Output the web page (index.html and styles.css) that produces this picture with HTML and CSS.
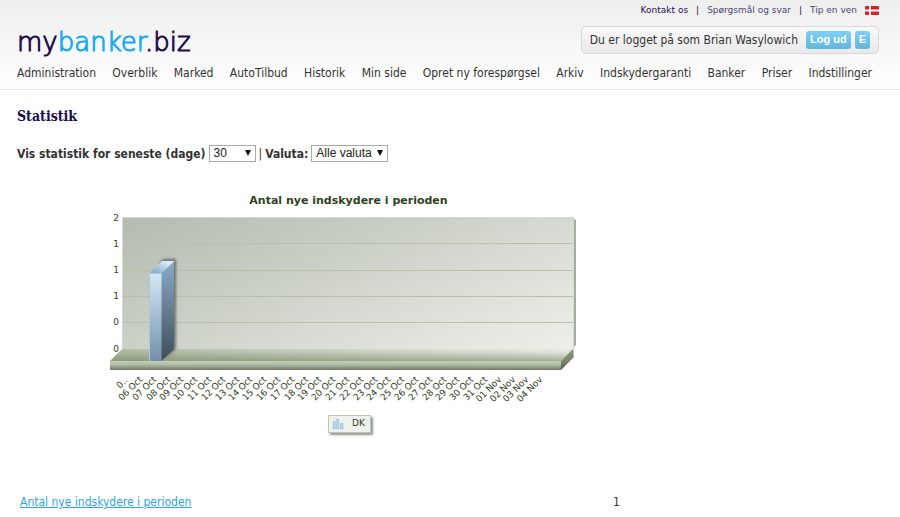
FILE: index.html
```html
<!DOCTYPE html>
<html lang="da">
<head>
<meta charset="utf-8">
<title>Statistik</title>
<link rel="stylesheet" href="styles.css">
</head>
<body>
<header class="header">
  <div class="toplinks">
    <a class="strong" href="#">Kontakt os</a><span class="sep">|</span>
    <a href="#">Spørgsmål og svar</a><span class="sep">|</span>
    <a href="#">Tip en ven</a>
    <svg class="flag" viewBox="0 0 14 9" width="14" height="9" aria-hidden="true"><rect width="14" height="9" rx="1" fill="#e01f26"/><path d="M5 0v9M0 4.5h14" stroke="#fff" stroke-width="1.8"/></svg>
  </div>
  <div class="brandbar">
    <a class="logo" href="#">my<span>banker</span>.biz</a>
    <div class="login">
      <span class="user">Du er logget på som Brian Wasylowich</span>
      <button class="btn" type="button">Log ud</button>
      <button class="btn" type="button">E</button>
    </div>
  </div>
  <nav class="nav">
    <a href="#">Administration</a>
    <a href="#">Overblik</a>
    <a href="#">Marked</a>
    <a href="#">AutoTilbud</a>
    <a href="#">Historik</a>
    <a href="#">Min side</a>
    <a href="#">Opret ny forespørgsel</a>
    <a href="#">Arkiv</a>
    <a href="#">Indskydergaranti</a>
    <a href="#">Banker</a>
    <a href="#">Priser</a>
    <a href="#">Indstillinger</a>
  </nav>
</header>
<main class="main">
  <h1>Statistik</h1>
  <form class="filters">
    <label for="days">Vis statistik for seneste (dage)</label>
    <span class="select days"><select id="days"><option>30</option></select></span>
    <span class="bar">|</span>
    <label for="currency">Valuta:</label>
    <span class="select currency"><select id="currency"><option>Alle valuta</option></select></span>
  </form>
  <svg class="chart" viewBox="100 186 490 258" width="490" height="258" role="img" aria-labelledby="chart-title">
    <defs>
      <linearGradient id="wall" gradientUnits="userSpaceOnUse" x1="230" y1="190" x2="330" y2="440"><stop offset="0" stop-color="#b7bdb2"/><stop offset="1" stop-color="#ecefe9"/></linearGradient>
      <linearGradient id="floor" x1="0" y1="0" x2="0" y2="1"><stop offset="0" stop-color="#b3bea8"/><stop offset="1" stop-color="#8d9a7c"/></linearGradient>
      <linearGradient id="floorlight" x1="0" y1="0" x2="1" y2="0"><stop offset="0" stop-color="#eef1ea" stop-opacity="0"/><stop offset="1" stop-color="#eef1ea" stop-opacity="1"/></linearGradient>
      <linearGradient id="fade" x1="0" y1="0" x2="0" y2="1"><stop offset="0" stop-color="#fff"/><stop offset="1" stop-color="#333"/></linearGradient>
      <mask id="floormask"><rect x="100" y="348" width="490" height="13" fill="url(#fade)"/></mask>
      <linearGradient id="edge" x1="0" y1="0" x2="0" y2="1"><stop offset="0" stop-color="#c6cfbc"/><stop offset=".4" stop-color="#b0bca4"/><stop offset="1" stop-color="#6f7b66"/></linearGradient>
      <linearGradient id="side" x1="0" y1="0" x2="0" y2="1"><stop offset="0" stop-color="#8c987e"/><stop offset=".6" stop-color="#78856a"/><stop offset="1" stop-color="#4f5948"/></linearGradient>
      <linearGradient id="front" x1="0" y1="0" x2="0" y2="1"><stop offset="0" stop-color="#d3e8f8"/><stop offset="1" stop-color="#7590a8"/></linearGradient>
      <linearGradient id="flank" x1="0" y1="0" x2="0" y2="1"><stop offset="0" stop-color="#8aabc8"/><stop offset="1" stop-color="#3e4d5a"/></linearGradient>
      <linearGradient id="cap" x1="0" y1="1" x2="1" y2="0"><stop offset=".2" stop-color="#8fb3d0"/><stop offset=".8" stop-color="#d9ebf8"/></linearGradient>
      <filter id="soft" x="-50%" y="-20%" width="200%" height="140%"><feGaussianBlur stdDeviation="1.5"/></filter>
      <filter id="soft-sm" x="-10%" y="-20%" width="120%" height="150%"><feGaussianBlur stdDeviation=".8"/></filter>
    </defs>
    <text class="chart-title" id="chart-title" x="348.5" y="204" text-anchor="middle">Antal nye indskydere i perioden</text>
    <path d="M573 218l3 2v125l-3 3z" fill="#a5ada0"/>
    <rect x="122" y="217" width="452" height="132" fill="url(#wall)"/>
    <path d="M122.500 349V217.500H573.500V348" fill="none" stroke="#d5dad1"/>
    <path d="M123 243.500h450M123 270.500h450M123 296.500h450M123 322.500h450" stroke="#b5c2a8"/>
    <path d="M122 349H573L561 361H110z" fill="url(#floor)"/>
    <path d="M122 349H573L561 361H110z" fill="url(#floorlight)" mask="url(#floormask)"/>
    <rect x="110" y="361" width="451" height="9" fill="url(#edge)"/>
    <path d="M561 361l12.500-12.500v9L561 370z" fill="url(#side)"/>
    <path d="M160 262l4-3h12v90l-10 8h-3z" fill="#444b45" opacity=".7" filter="url(#soft)"/>
    <rect x="149" y="273" width="13" height="88" fill="url(#front)"/>
    <path d="M161.500 273.500L174 261v88l-12.500 12z" fill="url(#flank)"/>
    <path d="M149 273.500L162 261h12.500l-13 12.500z" fill="url(#cap)"/>
    <path d="M149.500 361v-87.500H162" fill="none" stroke="#a9c7df"/>
    <g class="yaxis" text-anchor="end">
      <text x="119" y="221">2</text><text x="119" y="247">1</text><text x="119" y="273">1</text>
      <text x="119" y="299">1</text><text x="119" y="325">0</text><text x="119" y="352">0</text>
    </g>
    <g class="xaxis" id="xaxis" text-anchor="end"></g>
    <rect x="330" y="417" width="43" height="18" fill="#777" opacity=".8" filter="url(#soft-sm)"/>
    <rect x="328.500" y="415.500" width="42" height="17" fill="#eff2ec" stroke="#bdc8b2"/>
    <g fill="#b5d4ee" stroke="#8fb9dc" stroke-width=".5"><path d="M333 421.500h2.500v7.500H333zM336.500 419h2.500v10h-2.500zM340.500 423.500h2.500v5.500h-2.500z"/></g>
    <text class="legend" x="352" y="426">DK</text>
  </svg>
  <table class="totals">
    <tr><td class="name"><a href="#">Antal nye indskydere i perioden</a></td><td>1</td></tr>
  </table>
</main>
<script src="chart.js"></script>
</body>
</html>
```
FILE: styles.css
```css
body {
  margin: 0;
  background: #fff;
  color: #333;
  font: 12px/16px "DejaVu Sans Condensed", "DejaVu Sans", sans-serif;
  font-stretch: condensed;
}
a { color: inherit; text-decoration: none; }
.header {
  padding: 0 21px 8px 17px;
  background: linear-gradient(#eee, #fff);
  border-bottom: 1px solid #e8e8e8;
}
.toplinks {
  display: flex;
  justify-content: flex-end;
  align-items: center;
  gap: 8px;
  padding-top: 2px;
  font: 9px/16px "DejaVu Sans", sans-serif;
  color: #4d4770;
}
.toplinks .strong, .sep { color: #2b0a57; }
.brandbar {
  display: flex;
  justify-content: space-between;
  align-items: center;
  margin-top: 8px;
}
.logo {
  padding-top: 4px;
  font: 200 26px/24px "DejaVu Sans Light", "DejaVu Sans", sans-serif;
  color: #210b4d;
  -webkit-text-stroke: 1px;
}
.logo span { color: #14aaf5; }
.login {
  display: flex;
  align-items: center;
  gap: 4px;
  padding: 4px 8px;
  border: 1px solid #d8d8d8;
  border-radius: 5px;
  background: linear-gradient(#f9f9f9, #e9e9e9);
}
.user { margin-right: 4px; }
.btn {
  height: 18px;
  padding: 0 4px 2px;
  border: 0;
  border-radius: 3px;
  background: linear-gradient(#7fd0f7, #5fb6df);
  color: #fff;
  font: bold 11px/16px "Liberation Sans", sans-serif;
}
.nav {
  display: flex;
  justify-content: space-between;
  margin: 11px 7px 0 0;
  white-space: nowrap;
}
.main { padding: 17px; }
h1 {
  margin: 0;
  color: #1c0a50;
  font: bold 14px/18px "DejaVu Serif Condensed", "DejaVu Serif", serif;
  font-stretch: condensed;
}
.filters {
  display: flex;
  align-items: center;
  gap: 3px;
  margin-top: 20px;
  font-weight: bold;
}
.bar { font-weight: normal; }
.select { position: relative; }
.select::after {
  content: "";
  position: absolute;
  right: 5px;
  top: 5px;
  border: 3px solid transparent;
  border-top: 6px solid #111;
  border-bottom: 0;
  pointer-events: none;
}
select {
  display: block;
  appearance: none;
  width: 100%;
  height: 17px;
  padding: 0 4px;
  border: 1px solid #a9a9a9;
  border-radius: 0;
  background: #fff;
  color: #222;
  font: 12px/15px "Liberation Sans", sans-serif;
}
.days { width: 47px; }
.currency { width: 77px; }
.chart { display: block; margin: 24px 0 0 83px; }
.chart text { font: 9px "DejaVu Sans", sans-serif; fill: #2f3f22; }
.chart .chart-title { font-size: 11px; font-weight: bold; }
.totals { width: 100%; margin-top: 48px; border-spacing: 0; table-layout: fixed; }
.totals td { padding: 2px 3px; }
.totals .name { width: 587px; }
.totals a { color: #2ba6e8; text-decoration: underline; }
```
FILE: chart.js
```js
// Date labels along the x axis, one per day from 6 October to 4 November.
const axis = document.getElementById("xaxis");
function addLabel(text, x, y) {
  const t = document.createElementNS("http://www.w3.org/2000/svg", "text");
  t.setAttribute("transform", `translate(${x} ${y}) rotate(-45)`);
  t.textContent = text;
  axis.appendChild(t);
}
addLabel("0..", 128, 381);
for (let i = 0; i < 30; i++) {
  const day = i < 26 ? i + 6 : i - 25;
  const label = String(day).padStart(2, "0") + (i < 26 ? " Oct" : " Nov");
  addLabel(label, 143 + Math.round(i * 13.8), 380);
}
```
